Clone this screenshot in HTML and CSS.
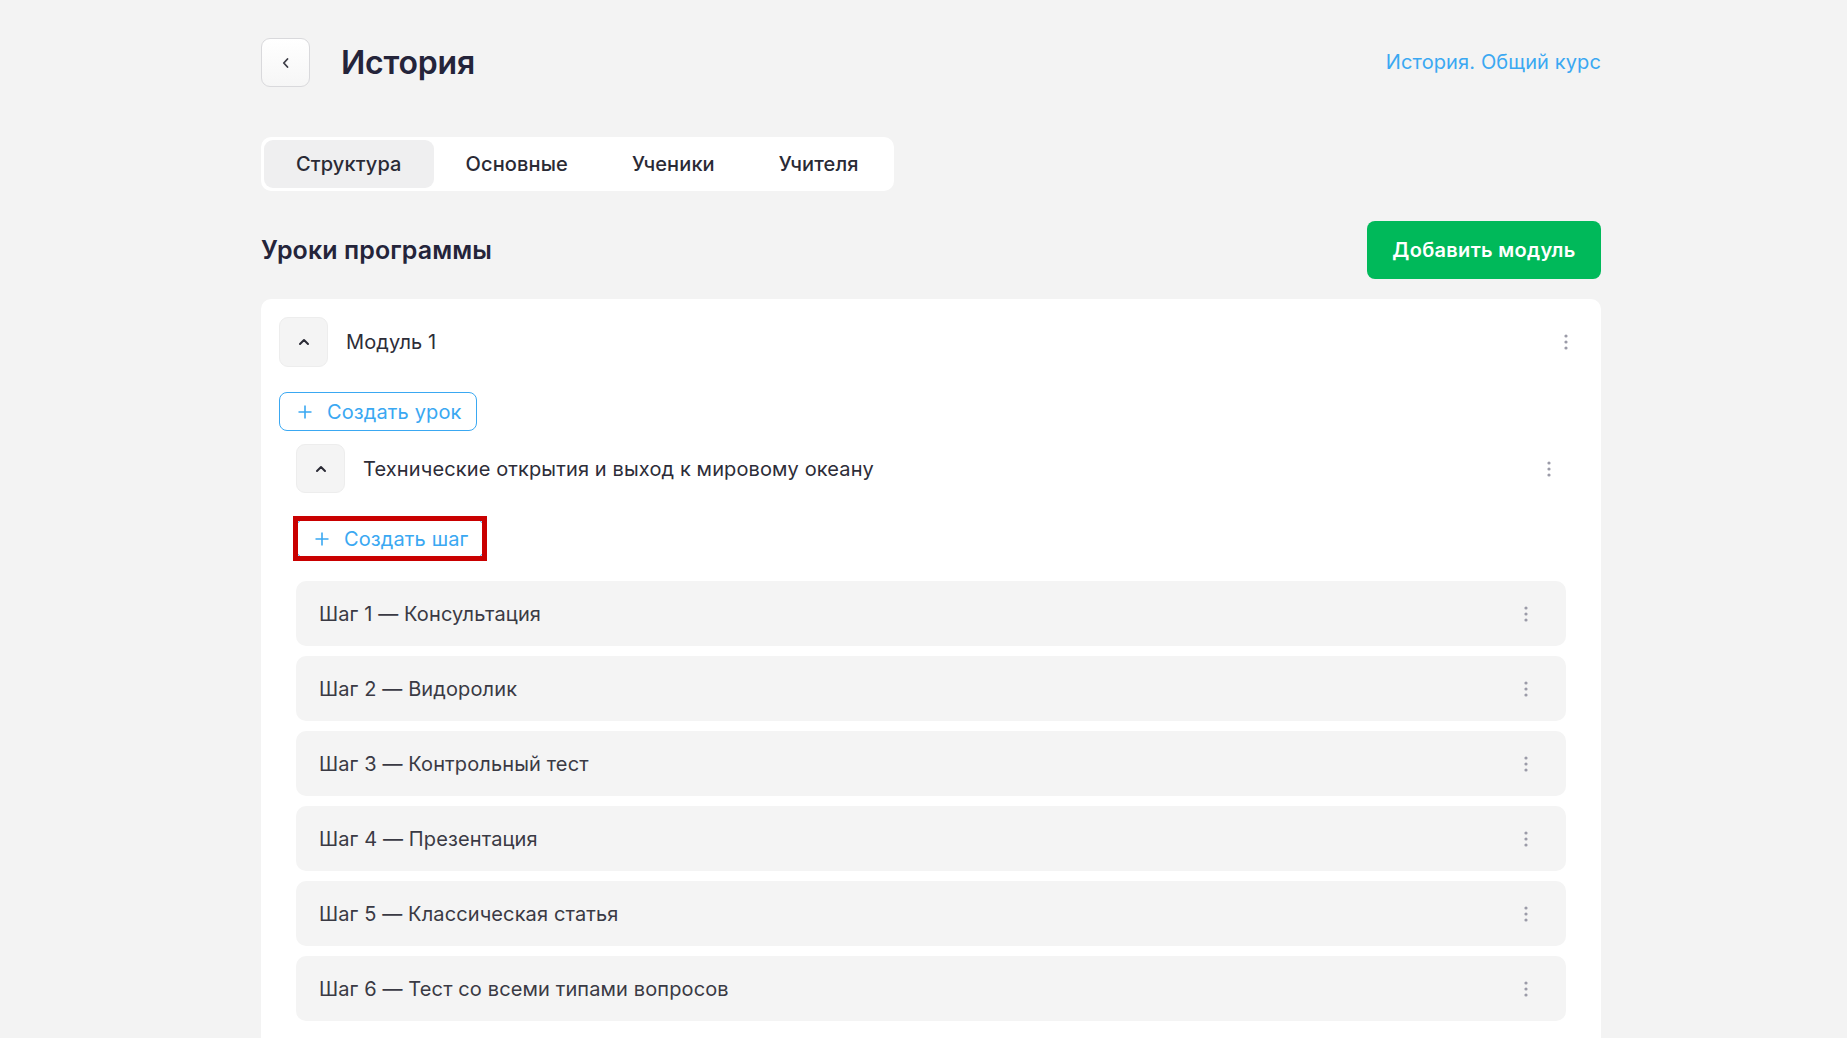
FILE: index.html
```html
<!DOCTYPE html>
<html lang="ru">
<head>
<meta charset="utf-8">
<title>История</title>
<link rel="stylesheet" href="styles.css">
</head>
<body>
<div class="page">
  <header class="header">
    <div class="header-left">
      <button class="back" aria-label="Назад">
        <svg width="10" height="12" viewBox="0 0 10 12"><path d="M6.5 2 L2.8 6 L6.5 10" fill="none" stroke="#3c3c46" stroke-width="1.8" stroke-linecap="round" stroke-linejoin="round"/></svg>
      </button>
      <h1 class="title">История</h1>
    </div>
    <a class="course-link" href="#">История. Общий курс</a>
  </header>

  <nav class="tabs">
    <span class="tab tab-active">Структура</span>
    <span class="tab">Основные</span>
    <span class="tab">Ученики</span>
    <span class="tab">Учителя</span>
  </nav>

  <div class="section-head">
    <h2 class="section-title">Уроки программы</h2>
    <button class="btn-green">Добавить модуль</button>
  </div>

  <section class="card">
    <div class="row-head module-head">
      <div class="row-left">
        <button class="chev chev-module" aria-label="Свернуть">
          <svg width="12" height="8" viewBox="0 0 12 8"><path d="M2 6 L6 2 L10 6" fill="none" stroke="#2a2a35" stroke-width="2" stroke-linecap="round" stroke-linejoin="round"/></svg>
        </button>
        <span class="row-text">Модуль 1</span>
      </div>
      <span class="dots"><svg width="4" height="16" viewBox="0 0 4 16"><circle cx="2" cy="2" r="1.6"/><circle cx="2" cy="8" r="1.6"/><circle cx="2" cy="14" r="1.6"/></svg></span>
    </div>

    <button class="btn-outline create-lesson">
      <svg width="14" height="14" viewBox="0 0 14 14"><path d="M7 0.5 V13.5 M0.5 7 H13.5" stroke="#3aa8f2" stroke-width="1.6"/></svg>
      <span>Создать урок</span>
    </button>

    <div class="lesson">
      <div class="row-head lesson-head">
        <div class="row-left">
          <button class="chev" aria-label="Свернуть">
            <svg width="12" height="8" viewBox="0 0 12 8"><path d="M2 6 L6 2 L10 6" fill="none" stroke="#2a2a35" stroke-width="2" stroke-linecap="round" stroke-linejoin="round"/></svg>
          </button>
          <span class="row-text">Технические открытия и выход к мировому океану</span>
        </div>
        <span class="dots"><svg width="4" height="16" viewBox="0 0 4 16"><circle cx="2" cy="2" r="1.6"/><circle cx="2" cy="8" r="1.6"/><circle cx="2" cy="14" r="1.6"/></svg></span>
      </div>

      <button class="btn-outline create-step">
        <svg width="14" height="14" viewBox="0 0 14 14"><path d="M7 0.5 V13.5 M0.5 7 H13.5" stroke="#3aa8f2" stroke-width="1.6"/></svg>
        <span>Создать шаг</span>
      </button>

      <ul class="steps">
        <li class="step"><span>Шаг 1 — Консультация</span><span class="dots"><svg width="4" height="16" viewBox="0 0 4 16"><circle cx="2" cy="2" r="1.6"/><circle cx="2" cy="8" r="1.6"/><circle cx="2" cy="14" r="1.6"/></svg></span></li>
        <li class="step"><span>Шаг 2 — Видоролик</span><span class="dots"><svg width="4" height="16" viewBox="0 0 4 16"><circle cx="2" cy="2" r="1.6"/><circle cx="2" cy="8" r="1.6"/><circle cx="2" cy="14" r="1.6"/></svg></span></li>
        <li class="step"><span>Шаг 3 — Контрольный тест</span><span class="dots"><svg width="4" height="16" viewBox="0 0 4 16"><circle cx="2" cy="2" r="1.6"/><circle cx="2" cy="8" r="1.6"/><circle cx="2" cy="14" r="1.6"/></svg></span></li>
        <li class="step"><span>Шаг 4 — Презентация</span><span class="dots"><svg width="4" height="16" viewBox="0 0 4 16"><circle cx="2" cy="2" r="1.6"/><circle cx="2" cy="8" r="1.6"/><circle cx="2" cy="14" r="1.6"/></svg></span></li>
        <li class="step"><span>Шаг 5 — Классическая статья</span><span class="dots"><svg width="4" height="16" viewBox="0 0 4 16"><circle cx="2" cy="2" r="1.6"/><circle cx="2" cy="8" r="1.6"/><circle cx="2" cy="14" r="1.6"/></svg></span></li>
        <li class="step"><span>Шаг 6 — Тест со всеми типами вопросов</span><span class="dots"><svg width="4" height="16" viewBox="0 0 4 16"><circle cx="2" cy="2" r="1.6"/><circle cx="2" cy="8" r="1.6"/><circle cx="2" cy="14" r="1.6"/></svg></span></li>
      </ul>
    </div>
  </section>
</div>
</body>
</html>
```

FILE: styles.css
```css
* { box-sizing: border-box; }

html, body {
  margin: 0;
  padding: 0;
  background: #f3f3f3;
  font-family: Inter, "Noto Sans", sans-serif;
  color: #2a2a35;
}

.page {
  width: 1340px;
  margin-left: 261px;
  padding-top: 38px;
}

.header {
  display: flex;
  align-items: center;
  justify-content: space-between;
  height: 49px;
}

.header-left {
  display: flex;
  align-items: center;
}

.back {
  width: 49px;
  height: 49px;
  border: 1px solid #d9d9dc;
  border-radius: 9px;
  background: linear-gradient(#ffffff, #f6f6f6);
  display: flex;
  align-items: center;
  justify-content: center;
  padding: 0;
}

.title {
  margin: 0 0 0 31px;
  font-size: 32px;
  font-weight: 600;
  color: #24243a;
  letter-spacing: -0.2px;
}

.course-link {
  font-size: 20px;
  color: #3aa8f2;
  text-decoration: none;
  letter-spacing: 0.12px;
  margin-top: -2px;
}

.tabs {
  display: inline-flex;
  margin-top: 50px;
  padding: 3px;
  background: #ffffff;
  border-radius: 10px;
}

.tab {
  height: 48px;
  display: flex;
  align-items: center;
  padding: 0 32px;
  font-size: 20px;
  font-weight: 500;
  letter-spacing: 0.12px;
  color: #2a2a35;
  border-radius: 9px;
}

.tab-active {
  background: #efeff0;
}

.section-head {
  margin-top: 30px;
  display: flex;
  align-items: center;
  justify-content: space-between;
  height: 58px;
}

.section-title {
  margin: 0;
  font-size: 25px;
  font-weight: 600;
  color: #24243a;
  letter-spacing: 0.1px;
}

.btn-green {
  width: 234px;
  height: 58px;
  border: none;
  border-radius: 8px;
  background: #00b95a;
  color: #ffffff;
  font-family: inherit;
  font-size: 20px;
  font-weight: 600;
  letter-spacing: 0.3px;
}

.card {
  margin-top: 20px;
  background: #ffffff;
  border-radius: 10px 10px 0 0;
  padding: 18px 18px 40px 18px;
}

.row-head {
  display: flex;
  align-items: center;
  justify-content: space-between;
}

.row-left {
  display: flex;
  align-items: center;
  gap: 18px;
}

.chev {
  width: 49px;
  height: 49px;
  border: 1px solid #ededed;
  border-radius: 9px;
  background: #f4f4f4;
  display: flex;
  align-items: center;
  justify-content: center;
  padding: 0;
}

.chev-module {
  height: 50px;
}

.row-text {
  font-size: 20px;
  letter-spacing: 0.12px;
  color: #2d2d38;
}

.dots {
  width: 34px;
  height: 34px;
  display: flex;
  align-items: center;
  justify-content: center;
  fill: #9b9ba8;
}

.btn-outline {
  position: relative;
  display: inline-flex;
  align-items: center;
  gap: 15px;
  height: 39px;
  padding: 0 15px 0 18px;
  background: #ffffff;
  border: 1px solid #3aa8f2;
  border-radius: 8px;
  font-family: inherit;
  font-size: 20px;
  letter-spacing: 0.12px;
  color: #3aa8f2;
}

.create-lesson {
  margin-top: 25px;
}

.lesson {
  margin: 13px 17px 0 17px;
}

.create-step {
  margin-top: 26px;
}

.create-step::after {
  content: "";
  position: absolute;
  top: -4px;
  left: -4px;
  right: -4px;
  bottom: -4px;
  border: 5px solid #c90000;
  pointer-events: none;
}

.steps {
  list-style: none;
  margin: 23px 0 0 0;
  padding: 0;
  display: flex;
  flex-direction: column;
  gap: 10px;
}

.step {
  height: 65px;
  display: flex;
  align-items: center;
  justify-content: space-between;
  padding: 0 23px;
  background: #f4f4f4;
  border-radius: 10px;
  font-size: 20px;
  letter-spacing: 0.12px;
  color: #3a3a44;
}
```
